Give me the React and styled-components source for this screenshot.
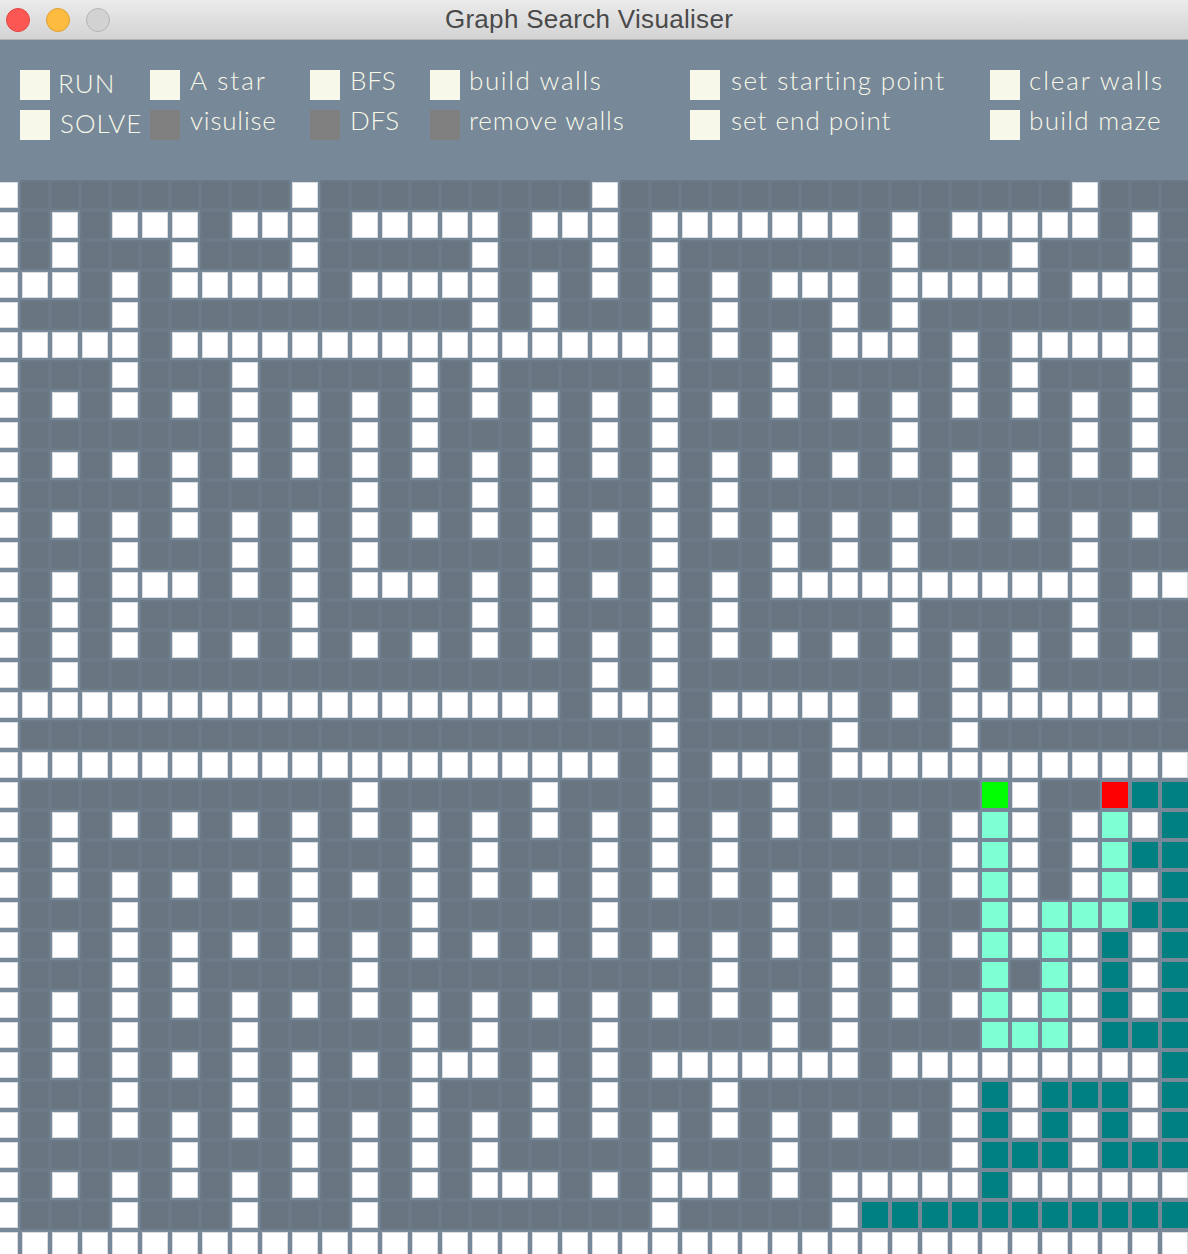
import React from "react";
import styled, { createGlobalStyle } from "styled-components";

const GlobalStyle = createGlobalStyle`
  html, body {
    margin: 0;
    padding: 0;
    background: #778899;
  }
`;

const Window = styled.div`
  width: 1188px;
  height: 1254px;
  display: flex;
  flex-direction: column;
  overflow: hidden;
  background-color: #778899;
`;

const TitleBar = styled.div`
  height: 40px;
  box-sizing: border-box;
  flex: none;
  display: grid;
  grid-template-columns: 1fr auto 1fr;
  align-items: center;
  padding: 0 16px 0 6px;
  background: linear-gradient(#ebebeb, #d3d3d3);
  border-bottom: 1px solid #b1b1b1;
`;

const Lights = styled.div`
  display: flex;
  gap: 16px;
`;

const Light = styled.span`
  width: 24px;
  height: 24px;
  box-sizing: border-box;
  border-radius: 50%;
  background-color: ${(p) => p.$fill};
  border: 1px solid ${(p) => p.$edge};
`;

const Title = styled.div`
  font-family: "Liberation Sans", Arial, sans-serif;
  font-size: 26px;
  letter-spacing: 0.3px;
  color: #4a4a4a;
`;

const Toolbar = styled.div`
  height: 140px;
  flex: none;
  box-sizing: border-box;
  padding: 30px 0 0 20px;
  display: grid;
  grid-template-columns: 130px 160px 120px 260px 300px 1fr;
  grid-template-rows: 30px 30px;
  grid-auto-flow: column;
  row-gap: 10px;
`;

const Option = styled.div`
  display: flex;
  align-items: flex-start;
  gap: ${(p) => p.$gap || 9}px;
`;

const Swatch = styled.span`
  width: 30px;
  height: 30px;
  flex: none;
  background-color: ${(p) => (p.$on ? "#f8f8ea" : "#808080")};
`;

const Label = styled.span`
  font-family: "Lato", "Open Sans", sans-serif;
  font-weight: 300;
  font-size: 26px;
  line-height: 30px;
  white-space: nowrap;
  color: #f8f8e8;
  letter-spacing: ${(p) => p.$track || 0}px;
  margin-top: ${(p) => p.$drop || -5}px;
`;

const Board = styled.div`
  flex: 1;
  overflow: hidden;
  padding-top: 2px;
  margin-left: -8px;
  display: grid;
  grid-template-columns: repeat(40, 26px);
  grid-auto-rows: 26px;
  gap: 4px;
`;

const cellColours = {
  ".": "#687580",
  "#": "#ffffff",
  T: "#008080",
  P: "#7fffd4",
  G: "#00ff00",
  R: "#ff0000",
};

const Cell = styled.div`
  box-sizing: border-box;
  background-color: ${(p) => cellColours[p.$kind]};
  border: ${(p) => (p.$kind === "#" ? "1px solid #d9dde1" : "none")};
  box-shadow: ${(p) => (p.$kind === "." ? "0 0 0 2px #6c7a87" : "none")};
`;

// 40 x 36 board, read off row by row
const maze = [
  "#.........#.........#...............#...",
  "#.#.###.###.#####.###.#######.#.#####.#.",
  "#.#...#...#.....#...#.#.......#...#...#.",
  "###.#.#####.#####.#.#.#.#.###.#####.###.",
  "#...#...........#.#...#.#...#.#.......#.",
  "#####.#################.#.#.###.#.#####.",
  "#...#...#.....#.#.....#...#.....#.#...#.",
  "#.#.#.#.#.#.#.#.#.#.#.#.#.#.#.#.#.#.#.#.",
  "#.......#.#.#.#...#.#.#.......#.....#.#.",
  "#.#.#.#.#.#.#.#.#.#.#.#.#.#.#.#.#.#.#.#.",
  "#.....#.....#...#.#...#.#.......#.#.....",
  "#.#.#.#.#.#.#.#.#.#.#.#.#.#.#.#.#.#.#.#.",
  "#...#...#.#.#.....#...#...#.#.#.....#...",
  "#.#.###.#.#.###.#.#.#.#.#.###########.##",
  "#.#.#.....#.....#.#...#.#.....#.....#...",
  "#.#.#.#.#.#.#.#.#.#.#.#.#.#.#.#.#.#.#.#.",
  "#.#.................#.#.........#.#.....",
  "###################.###.#####.#.#######.",
  "#.....................#.....#...#.......",
  "#####################.#.###.############",
  "#...........#.....#...#...#......G#..RTT",
  "#.#.#.#.#.#.#.#.#.#.#.#.#.#.#.#.#P#.#P#T",
  "#.#.......#...#.#...#.#.#.......#P#.#PTT",
  "#.#.#.#.#.#.#.#.#.#.#.#.#.#.#.#.#P#.#P#T",
  "#...#.....#...#.....#.....#...#..P#PPPTT",
  "#.#.#.#.#.#.#.#.#.#.#.#.#.#.#.#.#P#P#T#T",
  "#...#.#.....#...........#...#.#..P.P#T#T",
  "#.#.#.#.#.#.#.#.#.#.#.#.#.#.#.#.#P#P#T#T",
  "#.#.#...#.....#.#...#.....#.#....PPP#TTT",
  "#.#.#.#.#.#.#.###.#.#.#######.#########T",
  "#...#...#.#...#...#.#...#.......#T#TTT#T",
  "#.#.#.#.#.#.#.#.#.#.#.#.#.#.#.#.#T#T#T#T",
  "#.....#...#.#.#.#.....#...#.....#TTT#TTT",
  "#.#.#.#.#.#.#.#.###.#.###.#.#####T######",
  "#...#...#...#.........#.....#TTTTTTTTTTT",
  "########################################",
];

const options = [
  { text: "RUN", on: true, gap: 8, drop: -2, track: 1 },
  { text: "SOLVE", on: true, gap: 10, drop: -2, track: 1 },
  { text: "A star", on: true, gap: 10, track: 2 },
  { text: "visulise", on: false, gap: 10, track: 0.8 },
  { text: "BFS", on: true, gap: 10, track: 0.7 },
  { text: "DFS", on: false, gap: 10, track: 0.7 },
  { text: "build walls", on: true, track: 1.6 },
  { text: "remove walls", on: false, track: 0.9 },
  { text: "set starting point", on: true, gap: 11, track: 1.4 },
  { text: "set end point", on: true, gap: 11, track: 1 },
  { text: "clear walls", on: true, track: 1.9 },
  { text: "build maze", on: true, track: 1.3 },
];

const App = () => (
  <Window>
    <GlobalStyle />
    <TitleBar>
      <Lights>
        <Light $fill="#fc5753" $edge="#df4744" />
        <Light $fill="#fdbc40" $edge="#de9f34" />
        <Light $fill="#d2d2d2" $edge="#b5b5b5" />
      </Lights>
      <Title>Graph Search Visualiser</Title>
    </TitleBar>
    <Toolbar>
      {options.map((o) => (
        <Option key={o.text} $gap={o.gap}>
          <Swatch $on={o.on} />
          <Label $drop={o.drop} $track={o.track}>
            {o.text}
          </Label>
        </Option>
      ))}
    </Toolbar>
    <Board>
      {maze.map((row, y) =>
        row.split("").map((kind, x) => <Cell key={`${x}-${y}`} $kind={kind} />)
      )}
    </Board>
  </Window>
);

export default App;
